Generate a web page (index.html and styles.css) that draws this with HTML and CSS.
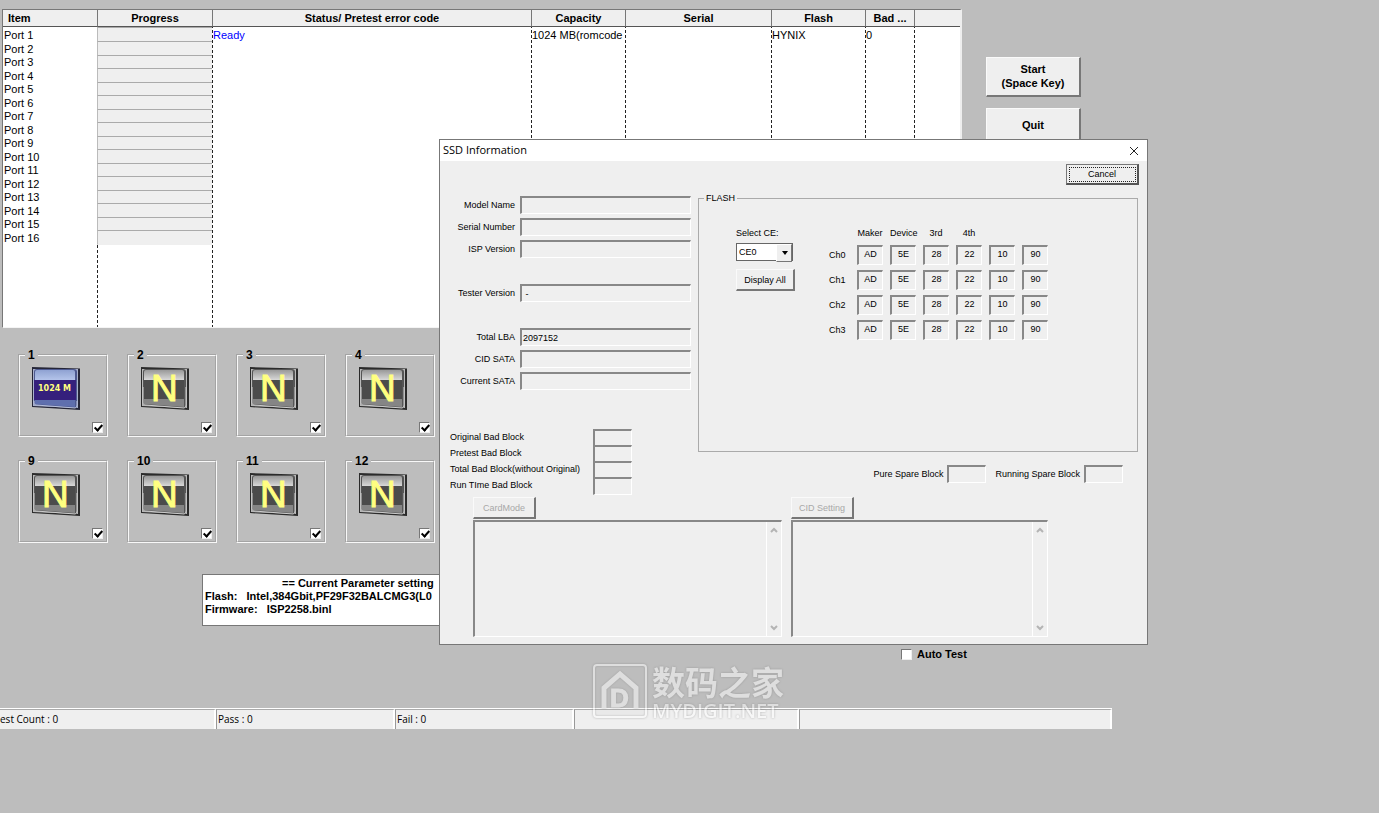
FILE: index.html
```
<!DOCTYPE html>
<html lang="en">
<head>
<meta charset="utf-8">
<title>SSD Information</title>
<link rel="stylesheet" href="styles.css">
</head>
<body>
<svg class="defs" aria-hidden="true">
  <defs>
    <linearGradient id="shine" x1="0" y1="0" x2="0" y2="1"><stop offset="0" stop-color="#999"/><stop offset="1" stop-color="#d8d8d8"/></linearGradient>
    <linearGradient id="shineBlue" x1="0" y1="0" x2="0" y2="1"><stop offset="0" stop-color="#8fa2d2"/><stop offset="1" stop-color="#b4c4ea"/></linearGradient>
  </defs>
  <symbol id="chip" viewBox="0 0 48 43">
    <path d="M0 0L48 1.500V43L0 40Z" fill="#2b2b2b"/>
    <path d="M1 2L46 2V41L1 39Z" fill="#b9b9b9"/>
    <path d="M2 5Q2 2 5 2H42Q45 2 45 5V41L2 38Z" fill="#555"/>
    <path d="M3 5Q3 3 5 3H41Q43 3 43 5V13H3Z" fill="url(#shine)"/>
    <path d="M3 13H43V32H3Z" fill="#4b4b4b"/>
    <path d="M3 32H43V40L3 37Z" fill="#858585"/>
    <path d="M2 20V36Q2 38 4 38L43 41Q45 41 45 38V20" fill="none" stroke="#ccc"/>
  </symbol>
  <symbol id="chip-ready" viewBox="0 0 48 43">
    <path d="M0 0L48 1.500V43L0 40Z" fill="#252638"/>
    <path d="M1 2L46 2V41L1 39Z" fill="#a9b1cc"/>
    <path d="M2 5Q2 2 5 2H42Q45 2 45 5V41L2 38Z" fill="#4d5990"/>
    <path d="M3 5Q3 3 5 3H41Q43 3 43 5V13H3Z" fill="url(#shineBlue)"/>
    <path d="M2 13H44V33H2Z" fill="#35207c"/>
    <path d="M3 33H43V40L3 37Z" fill="#5f6fae"/>
    <path d="M2 34V36Q2 38 4 38L43 41Q45 41 45 38V34" fill="none" stroke="#b8c0dc"/>
  </symbol>
  <symbol id="up" viewBox="0 0 8 6"><path d="M1 5L4 2L7 5" fill="none" stroke="#b4b4b4" stroke-width="2"/></symbol>
  <symbol id="down" viewBox="0 0 8 6"><path d="M1 1L4 4L7 1" fill="none" stroke="#b4b4b4" stroke-width="2"/></symbol>
</svg>

<main class="app">
  <div class="top">
    <div class="list">
      <table class="ports">
        <colgroup><col class="c-item"><col class="c-progress rule"><col class="rule"><col class="c-cap rule"><col class="c-serial rule"><col class="c-flash rule"><col class="c-bad rule"><col class="c-end rule"></colgroup>
        <thead><tr><th class="first">Item</th><th>Progress</th><th>Status/ Pretest error code</th><th>Capacity</th><th>Serial</th><th>Flash</th><th>Bad ...</th><th></th></tr></thead>
        <tbody>
          <tr><td>Port 1</td><td class="bar"></td><td class="ready">Ready</td><td>1024 MB(romcode</td><td></td><td>HYNIX</td><td>0</td><td></td></tr>
          <tr><td>Port 2</td><td class="bar"></td><td></td><td></td><td></td><td></td><td></td><td></td></tr>
          <tr><td>Port 3</td><td class="bar"></td><td></td><td></td><td></td><td></td><td></td><td></td></tr>
          <tr><td>Port 4</td><td class="bar"></td><td></td><td></td><td></td><td></td><td></td><td></td></tr>
          <tr><td>Port 5</td><td class="bar"></td><td></td><td></td><td></td><td></td><td></td><td></td></tr>
          <tr><td>Port 6</td><td class="bar"></td><td></td><td></td><td></td><td></td><td></td><td></td></tr>
          <tr><td>Port 7</td><td class="bar"></td><td></td><td></td><td></td><td></td><td></td><td></td></tr>
          <tr><td>Port 8</td><td class="bar"></td><td></td><td></td><td></td><td></td><td></td><td></td></tr>
          <tr><td>Port 9</td><td class="bar"></td><td></td><td></td><td></td><td></td><td></td><td></td></tr>
          <tr><td>Port 10</td><td class="bar"></td><td></td><td></td><td></td><td></td><td></td><td></td></tr>
          <tr><td>Port 11</td><td class="bar"></td><td></td><td></td><td></td><td></td><td></td><td></td></tr>
          <tr><td>Port 12</td><td class="bar"></td><td></td><td></td><td></td><td></td><td></td><td></td></tr>
          <tr><td>Port 13</td><td class="bar"></td><td></td><td></td><td></td><td></td><td></td><td></td></tr>
          <tr><td>Port 14</td><td class="bar"></td><td></td><td></td><td></td><td></td><td></td><td></td></tr>
          <tr><td>Port 15</td><td class="bar"></td><td></td><td></td><td></td><td></td><td></td><td></td></tr>
          <tr><td>Port 16</td><td class="bar"></td><td></td><td></td><td></td><td></td><td></td><td></td></tr>
          <tr class="rest"><td></td><td></td><td></td><td></td><td></td><td></td><td></td><td></td></tr>
        </tbody>
      </table>
    </div>
    <div class="actions">
      <button class="btn big">Start<br>(Space Key)</button>
      <button class="btn big quit">Quit</button>
    </div>
  </div>

  <div class="tiles">
    <fieldset class="tile"><legend>1</legend><svg class="chip"><use href="#chip-ready"/><text x="6" y="24" class="chip-size">1024 M</text></svg><input type="checkbox" class="check" aria-label="Port 1" checked></fieldset>
    <fieldset class="tile"><legend>2</legend><svg class="chip"><use href="#chip"/><text x="10" y="34" class="chip-n">N</text></svg><input type="checkbox" class="check" aria-label="Port 2" checked></fieldset>
    <fieldset class="tile"><legend>3</legend><svg class="chip"><use href="#chip"/><text x="10" y="34" class="chip-n">N</text></svg><input type="checkbox" class="check" aria-label="Port 3" checked></fieldset>
    <fieldset class="tile"><legend>4</legend><svg class="chip"><use href="#chip"/><text x="10" y="34" class="chip-n">N</text></svg><input type="checkbox" class="check" aria-label="Port 4" checked></fieldset>
    <fieldset class="tile"><legend>9</legend><svg class="chip"><use href="#chip"/><text x="10" y="34" class="chip-n">N</text></svg><input type="checkbox" class="check" aria-label="Port 9" checked></fieldset>
    <fieldset class="tile"><legend>10</legend><svg class="chip"><use href="#chip"/><text x="10" y="34" class="chip-n">N</text></svg><input type="checkbox" class="check" aria-label="Port 10" checked></fieldset>
    <fieldset class="tile"><legend>11</legend><svg class="chip"><use href="#chip"/><text x="10" y="34" class="chip-n">N</text></svg><input type="checkbox" class="check" aria-label="Port 11" checked></fieldset>
    <fieldset class="tile"><legend>12</legend><svg class="chip"><use href="#chip"/><text x="10" y="34" class="chip-n">N</text></svg><input type="checkbox" class="check" aria-label="Port 12" checked></fieldset>
  </div>

  <div class="params">
    <p class="params-title">== Current Parameter setting</p>
    <p>Flash:&nbsp;&nbsp; Intel,384Gbit,PF29F32BALCMG3(L0</p>
    <p>Firmware:&nbsp;&nbsp; ISP2258.binl</p>
  </div>
  <label class="auto"><input type="checkbox" class="check">Auto Test</label>

  <footer class="status">
    <span class="s1">est Count : 0</span><span class="s2">Pass : 0</span><span class="s2">Fail : 0</span><span class="s3"></span><span class="s4"></span>
  </footer>
</main>

<section class="dialog" role="dialog" aria-labelledby="dlg-title">
  <header class="titlebar">
    <h1 id="dlg-title">SSD Information</h1>
    <button class="close" aria-label="Close"><svg viewBox="0 0 10 10"><path d="M1 1L9 9M9 1L1 9" fill="none" stroke="#222"/></svg></button>
  </header>
  <div class="cancel-row"><button class="btn cancel">Cancel</button></div>
  <div class="panes">
    <div class="info">
      <label for="f1">Model Name</label><input id="f1" class="field" readonly>
      <label for="f2">Serial Number</label><input id="f2" class="field" readonly>
      <label for="f3">ISP Version</label><input id="f3" class="field" readonly>
      <label for="f4" class="gap">Tester Version</label><input id="f4" class="field gap" value=" -" readonly>
      <label for="f5" class="gap">Total LBA</label><input id="f5" class="field gap" value="2097152" readonly>
      <label for="f6">CID SATA</label><input id="f6" class="field" readonly>
      <label for="f7">Current SATA</label><input id="f7" class="field" readonly>
    </div>
    <fieldset class="flash">
      <legend>FLASH</legend>
      <div class="ce">
        <label for="ce">Select CE:</label>
        <span class="combo"><select id="ce"><option>CE0</option></select></span>
        <button class="btn display">Display All</button>
      </div>
      <table class="ids">
        <thead><tr><td></td><th>Maker</th><th>Device</th><th>3rd</th><th>4th</th><td></td><td></td></tr></thead>
        <tbody>
          <tr><th>Ch0</th><td><span>AD</span></td><td><span>5E</span></td><td><span>28</span></td><td><span>22</span></td><td><span>10</span></td><td><span>90</span></td></tr>
          <tr><th>Ch1</th><td><span>AD</span></td><td><span>5E</span></td><td><span>28</span></td><td><span>22</span></td><td><span>10</span></td><td><span>90</span></td></tr>
          <tr><th>Ch2</th><td><span>AD</span></td><td><span>5E</span></td><td><span>28</span></td><td><span>22</span></td><td><span>10</span></td><td><span>90</span></td></tr>
          <tr><th>Ch3</th><td><span>AD</span></td><td><span>5E</span></td><td><span>28</span></td><td><span>22</span></td><td><span>10</span></td><td><span>90</span></td></tr>
        </tbody>
      </table>
    </fieldset>
  </div>
  <div class="blocks">
    <div class="bad">
      <label for="b1">Original Bad Block</label><input id="b1" class="field" readonly>
      <label for="b2">Pretest Bad Block</label><input id="b2" class="field" readonly>
      <label for="b3">Total Bad Block(without Original)</label><input id="b3" class="field" readonly>
      <label for="b4">Run TIme Bad Block</label><input id="b4" class="field" readonly>
    </div>
    <div class="spare">
      <label for="p1">Pure Spare Block</label><input id="p1" class="field" readonly>
      <label for="p2">Running Spare Block</label><input id="p2" class="field" readonly>
    </div>
  </div>
  <div class="logs">
    <div class="log wide">
      <button class="btn mode" disabled>CardMode</button>
      <div class="memo"><textarea aria-label="Card mode" disabled></textarea><div class="scroll"><svg><use href="#up"/></svg><svg><use href="#down"/></svg></div></div>
    </div>
    <div class="log">
      <button class="btn mode" disabled>CID Setting</button>
      <div class="memo"><textarea aria-label="CID setting" disabled></textarea><div class="scroll"><svg><use href="#up"/></svg><svg><use href="#down"/></svg></div></div>
    </div>
  </div>
</section>

<div class="mark">
  <svg viewBox="0 0 56 56">
    <rect x="2" y="2" width="52" height="52" rx="3" fill="#fff" fill-opacity=".12" stroke="#fff" stroke-width="2"/>
    <path d="M12 45V25L28 11L44 25V45" fill="none" stroke="#fff" stroke-width="5"/>
    <text x="18" y="44" class="mark-d">D</text>
  </svg>
  <div class="mark-text"><span class="mark-cn">数码之家</span><span class="mark-en">MYDIGIT.NET</span></div>
</div>
</body>
</html>
```
FILE: styles.css
```
* { box-sizing: border-box; }
body {
  margin: 0;
  position: relative;
  min-height: 100vh;
  overflow: hidden;
  background: #bdbdbd;
  color: #000;
  font: 11px/14px "Liberation Sans", Arial, sans-serif;
}
button, input, select, textarea { font: inherit; color: inherit; margin: 0; }
p, h1 { margin: 0; font: inherit; }
fieldset { margin: 0; padding: 0; min-width: 0; }
.defs { position: absolute; width: 0; height: 0; }

.app { margin-right: 267px; padding-top: 9px; font-weight: bold; }
.top { display: flex; padding-left: 2px; }
.list {
  flex: 1;
  height: 319px;
  border: 1px solid #777;
  border-right: 2px solid #eee;
  border-bottom-color: #f4f4f4;
  background: #fff;
  overflow: hidden;
}
.ports { width: 100%; table-layout: fixed; border-collapse: separate; border-spacing: 0; font-weight: normal; }
.ports th {
  height: 17px;
  padding: 0;
  background: #efefef;
  border-left: 1px solid #777;
  border-bottom: 1px solid #555;
  line-height: 16px;
}
.ports .first { text-align: left; padding-left: 5px; border-left: 0; }
.ports td { height: 13px; padding: 0 0 0 1px; line-height: 13px; white-space: nowrap; overflow: hidden; }
.ports tr:nth-child(even) td { height: 14px; }
.ports tbody tr:first-child td { height: 15px; padding-top: 2px; }
.ports .rest td { height: 90px; }
.ports .bar { background: #efefef; border-left: 1px solid #bbb; border-bottom: 1px solid #aaa; }
.ports tbody tr:first-child .bar { border-top: 1px solid #aaa; }
.ports tbody tr:nth-child(16) .bar { border-bottom-color: #efefef; }
.ports .ready { color: #00f; }
.rule { background: repeating-linear-gradient(#222 0 3px, #fff 3px 5px) left / 1px 100% no-repeat; }
.c-item { width: 94px; }
.c-progress { width: 115px; }
.c-cap { width: 94px; }
.c-serial { width: 146px; }
.c-flash { width: 94px; }
.c-bad { width: 49px; }
.c-end { width: 46px; }

.actions { display: flex; flex-direction: column; gap: 11px; padding: 48px 31px 0 24px; }
.btn {
  padding: 0;
  background: #efefef;
  border: 1px solid #fafafa;
  border-right: 2px solid #777;
  border-bottom: 2px solid #777;
  border-radius: 0;
}
.big { width: 95px; height: 40px; padding-bottom: 2px; font-weight: bold; line-height: 14px; }
.quit { height: 36px; }

.tiles { display: grid; grid-template-columns: repeat(4, 90px); gap: 17px 19px; padding: 20px 0 0 18px; }
.tile { position: relative; height: 89px; border: 2px groove #f8f8f8; padding: 5px 0 0 12px; }
.tile legend { margin-left: -7px; padding: 0 3px; line-height: 14px; font-size: 12px; }
.chip { display: block; width: 48px; height: 43px; }
.chip-n { font: 37px "Liberation Sans", sans-serif; fill: #ffff80; stroke: #ffff80; }
.chip-size { font: bold 8px "DejaVu Sans", sans-serif; fill: #ffff80; }
.check {
  appearance: none;
  width: 11px;
  height: 11px;
  background: #fff;
  border: 1px solid #777;
  border-right-color: #eee;
  border-bottom-color: #eee;
}
.check:checked::after {
  content: "";
  display: block;
  width: 3px;
  height: 6px;
  margin: 0 0 0 3px;
  border: solid #000;
  border-width: 0 2px 2px 0;
  transform: rotate(42deg);
}
.tile .check { position: absolute; right: 3px; bottom: 2px; }

.params {
  width: 560px;
  height: 52px;
  margin: 31px 0 0 202px;
  padding: 2px 0 0 2px;
  background: #fff;
  border: 1px solid #777;
  line-height: 13px;
  overflow: hidden;
  white-space: nowrap;
}
.params-title { padding-left: 77px; }
.auto { display: flex; align-items: center; gap: 5px; margin: 21px 0 0 901px; }

.status { display: flex; height: 21px; margin-top: 47px; background: #efefef; border-top: 1px solid #fff; font: 10px/18px "Open Sans", sans-serif; }
.status span { border-top: 1px solid #aaa; border-left: 1px solid #999; border-right: 2px solid #fff; padding-left: 1px; }
.status .s1 { width: 216px; border-left: 0; padding: 0; }
.s2 { width: 179px; }
.s3 { width: 225px; }
.s4 { flex: 1; }

.dialog {
  position: absolute;
  left: 439px;
  top: 139px;
  width: 709px;
  height: 506px;
  background: #efefef;
  border: 1px solid #777;
  font-size: 9px;
}
.titlebar { display: flex; justify-content: space-between; align-items: center; height: 21px; padding: 0 7px 0 3px; background: #fff; font: 11px/18px "Open Sans", sans-serif; }
.titlebar h1 { height: 20px; }
.close { width: 12px; height: 12px; padding: 1px; border: 0; background: none; }
.close svg { display: block; width: 10px; height: 10px; }
.cancel-row { display: flex; justify-content: flex-end; padding: 3px 8px 0; }
.cancel { width: 73px; height: 21px; border: 1px solid #777; border-right: 2px solid #555; border-bottom: 2px solid #555; outline: 1px dotted #222; outline-offset: -4px; }

.panes { display: flex; gap: 7px; padding: 7px 9px 0 0; }
.info { display: grid; grid-template-columns: 75px 171px; column-gap: 5px; align-content: start; grid-auto-rows: auto; row-gap: 4px; padding-top: 4px; }
.info label { text-align: right; line-height: 18px; white-space: nowrap; }
.info .gap { margin-top: 22px; }
.field {
  width: 100%;
  height: 18px;
  padding: 0 1px;
  background: #efefef;
  border: 1px solid #fff;
  border-top: 2px solid #888;
  border-left: 2px solid #888;
  border-radius: 0;
}
.flash { flex: 1; display: flex; align-items: flex-start; height: 260px; border: 1px solid #aaa; padding: 22px 0 0 37px; }
.flash legend { margin-left: -32px; padding: 0 2px; line-height: 12px; }
.ce { display: flex; flex-direction: column; width: 93px; align-items: flex-start; }
.combo { position: relative; width: 57px; margin: 3px 0 8px; }
.combo select { display: block; appearance: none; width: 100%; height: 18px; padding: 0 2px; background: #fff; border: 1px solid #666; border-radius: 0; }
.combo::after { content: ""; position: absolute; right: 5px; top: 8px; border: solid transparent; border-width: 4px 3px 0; border-top-color: #000; }
.combo::before { content: ""; position: absolute; right: 1px; top: 1px; width: 14px; height: 16px; background: #efefef; border: 1px solid #fff; border-right-color: #777; border-bottom-color: #777; pointer-events: none; }
.display { width: 59px; height: 22px; }
.ids { border-collapse: collapse; table-layout: fixed; width: 226px; }
.ids th, .ids td { padding: 0; width: 33px; height: 25px; font-weight: normal; text-align: left; vertical-align: top; }
.ids thead th, .ids thead td { height: 19px; line-height: 14px; padding-right: 7px; text-align: center; white-space: nowrap; }
.ids thead td:first-child { width: 28px; padding: 0; }
.ids tbody th { line-height: 21px; }
.ids span { display: block; width: 26px; height: 20px; border: 1px solid #fff; border-top: 2px solid #888; border-left: 2px solid #888; line-height: 15px; text-align: center; }

.blocks { display: flex; justify-content: space-between; padding: 0 24px 0 10px; margin-top: -23px; }
.bad { display: grid; grid-template-columns: 143px 39px; grid-auto-rows: 16px; align-items: start; line-height: 16px; white-space: nowrap; }
.spare { display: flex; gap: 4px; align-items: center; align-self: flex-end; height: 18px; margin-bottom: 10px; }
.spare .field { width: 39px; }
.spare .field + label { margin-left: 5px; }

.logs { display: flex; gap: 9px; padding: 4px 99px 0 33px; }
.log { flex: 257; }
.wide { flex: 309; }
.mode { width: 63px; height: 22px; margin-bottom: 1px; color: #a8a8a8; }
.memo { display: flex; height: 117px; border: 1px solid #fff; border-top: 2px solid #888; border-left: 2px solid #888; }
.memo textarea { flex: 1; min-width: 0; border: 0; background: #efefef; resize: none; }
.scroll { display: flex; flex-direction: column; justify-content: space-between; align-items: center; width: 15px; padding: 5px 0; border-left: 1px solid #fff; }
.scroll svg { width: 8px; height: 6px; }

.mark { position: absolute; left: 592px; top: 663px; display: flex; gap: 4px; opacity: .5; color: #fff; filter: drop-shadow(0 0 1px #777); pointer-events: none; }
.mark svg { width: 56px; height: 56px; }
.mark-d { font: bold 26px "Liberation Sans", sans-serif; fill: #fff; stroke: #fff; }
.mark-text { display: flex; flex-direction: column; }
.mark-cn { font: bold 33px/36px "Noto Sans CJK SC", sans-serif; }
.mark-en { font: 600 20px/24px "Open Sans", sans-serif; }
```
